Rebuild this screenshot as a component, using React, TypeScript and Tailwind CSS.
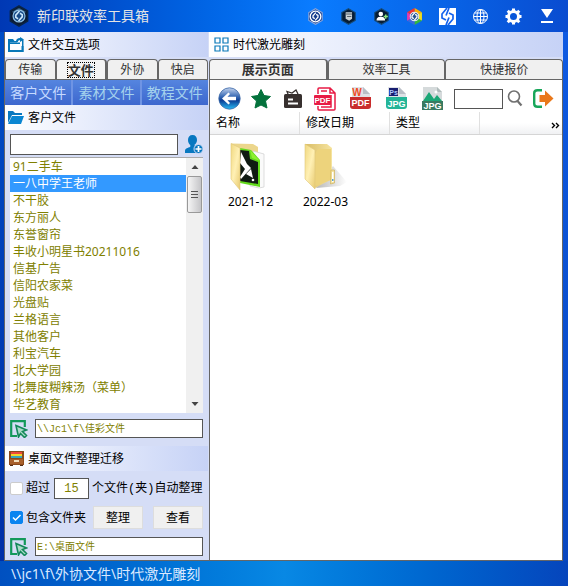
import React, { useState } from 'react'

const CLIENTS = [
    '91二手车',
    '一八中学王老师',
    '不干胶',
    '东方丽人',
    '东誉窗帘',
    '丰收小明星书20211016',
    '信基广告',
    '信阳农家菜',
    '光盘贴',
    '兰格语言',
    '其他客户',
    '利宝汽车',
    '北大学园',
    '北舞度糊辣汤（菜单）',
    '华艺教育',
]

const HEX = 'M12 1 21.5 6.5v11L12 23 2.5 17.5v-11z'

const Swirl = ({ color }: { color: string }) => (
    <>
        <path d='M12.5 6.5 8.5 11v2.5L11 15' fill='none' stroke={color} strokeWidth='1.8' />
        <path d='M11.5 17.5 15.5 13v-2.5L13 9' fill='none' stroke={color} strokeWidth='1.8' />
    </>
)

const LogoIcon = () => (
    <svg width='22' height='22' viewBox='0 0 24 24'>
        <path d={HEX} fill='#0b1c34' stroke='#0a2545' strokeWidth='1.5' />
        <path d='M12 3 20 7.5 12 10 4 7.5z' fill='#2d577d' />
        <circle cx='12' cy='12' r='6.5' fill='#174a86' stroke='#8fbfe2' strokeWidth='1.3' />
        <Swirl color='#c9e6fa' />
    </svg>
)

const HexSwirlIcon = () => (
    <svg width='17' height='17' viewBox='0 0 24 24'>
        <path d={HEX} fill='#143c8d' stroke='#8aa6dc' strokeWidth='1.5' />
        <circle cx='12' cy='12' r='7.5' fill='#143c8d' stroke='#fff' strokeWidth='1.8' />
        <Swirl color='#fff' />
    </svg>
)

const HexCupIcon = () => (
    <svg width='17' height='17' viewBox='0 0 24 24'>
        <path d={HEX} fill='#071d35' stroke='#164b78' strokeWidth='1.5' />
        <path d='M8 6h9v9l-4 3-5-3z' fill='#c8d0d4' />
        <path d='M8 8.5h9M10 12h6' stroke='#43505a' strokeWidth='1.2' />
    </svg>
)

const HexUserIcon = () => (
    <svg width='17' height='17' viewBox='0 0 24 24'>
        <path d={HEX} fill='#071d35' stroke='#164b78' strokeWidth='1.5' />
        <circle cx='11' cy='8.5' r='3.2' fill='#fff' />
        <path d='M5 17.5c0-4 3-5 6-5s6 1 6 5z' fill='#fff' />
        <path d='M18 9v6M15 12h6' stroke='#8ee87d' strokeWidth='2' />
    </svg>
)

const HexColorIcon = () => (
    <svg width='17' height='17' viewBox='0 0 24 24'>
        <path d='M12 12V0l10.500 6z' fill='#ffb000' />
        <path d='M12 12 22.500 6v12z' fill='#f2dd1c' />
        <path d='M12 12 22.500 18 12 24z' fill='#35b63c' />
        <path d='M12 12v12l-10.500-6z' fill='#3b67dc' />
        <path d='M12 12 1.500 18v-12z' fill='#e23bb0' />
        <path d='M12 12 1.500 6 12 0z' fill='#ef3434' />
        <circle cx='12' cy='12' r='6' fill='#24508d' stroke='#e6ecf5' strokeWidth='1.5' />
        <Swirl color='#fff' />
    </svg>
)

const SquareSwirlIcon = () => (
    <svg width='17' height='17' viewBox='0 0 17 17'>
        <path d='M0 0h17v17H0z' fill='#fff' />
        <path d='M8 0 3 6v4l4 2M9 17l5-6V7l-4-2M10 0 7 7.500M7 17l3-7.500' fill='none' stroke='#1463ee' strokeWidth='1.700' />
    </svg>
)

const GlobeIcon = () => (
    <svg width='17' height='17' viewBox='0 0 17 17' fill='none' stroke='#fff' strokeWidth='1'>
        <circle cx='8.5' cy='8.5' r='7' />
        <ellipse cx='8.5' cy='8.5' rx='3.5' ry='7' />
        <path d='M8.5 1.5v14M1.5 8.5h14M2.5 5h12M2.5 12h12' />
    </svg>
)

const GearIcon = () => (
    <svg width='17' height='17' viewBox='0 0 17 17'>
        <circle cx='8.5' cy='8.5' r='5' fill='none' stroke='#fff' strokeWidth='3' />
        <path
            d='M8.5 0.500v3M8.5 13.500v3M0.500 8.5h3M13.500 8.5h3M2.700 2.700l2 2M12.300 12.300l2 2M14.300 2.700l-2 2M4.700 12.300l-2 2'
            stroke='#fff'
            strokeWidth='3'
        />
    </svg>
)

const MinimizeIcon = () => (
    <svg width='14' height='14' viewBox='0 0 14 14'>
        <path d='M1 0h12L7 9z' fill='#fff' />
        <path d='M1 12h12v2H1z' fill='#fff' />
    </svg>
)

const FolderArrowIcon = () => (
    <svg width='16' height='15' viewBox='0 0 16 15'>
        <path d='M1 14V3h4l1 2h6v9z' fill='#fff' />
        <path d='M0 2h5l1.500 2H9v1.500H2V13h11.500V9H15.500v6H0z' fill='#0878b8' />
        <path d='M2 5.500h10V7H2zM14 3v12h1.500V3z' fill='#0878b8' />
        <path d='M8 5c0-3 1.500-4 4-4V0l4 2.500L12 5V3.300C10.500 3.300 10 3.800 9.800 5z' fill='#0878b8' />
    </svg>
)

const GridIcon = () => (
    <svg width='15' height='15' viewBox='0 0 15 15' fill='none' stroke='#0878b8' strokeWidth='1.2'>
        <path d='M1 1h5v5H1zM9 1h5v5H9zM1 9h5v5H1zM9 9h5v5H9z' />
    </svg>
)

const FolderOpenIcon = () => (
    <svg width='16' height='15' viewBox='0 0 16 15'>
        <path d='M0 1h5l2 2h7v2H4L0 13z' fill='#0878c0' />
        <path d='M4 6h12l-3 8H0z' fill='#0a86d2' />
    </svg>
)

const AddUserIcon = () => (
    <svg width='18' height='19' viewBox='0 0 18 19'>
        <path d='M7.5 0C4.5 0 3 2 3 5c0 2.5 1 4 2.3 5v1.7C3 13 0 13 0 16v2h13l-2-6.5-1.500-1V9.800C11 9 12 7 12 5c0-3-1.500-5-4.500-5z' fill='#0878c0' />
        <circle cx='13.5' cy='14' r='4.5' fill='#0878c0' stroke='#d5ddf6' />
        <path d='M13.5 11v6M10.500 14h6' stroke='#fff' strokeWidth='1.7' />
    </svg>
)

const PickIcon = () => (
    <svg width='18' height='18' viewBox='0 0 18 18'>
        <path d='M7 16H1.200V1.200h13.600V7' fill='none' stroke='#13995b' strokeWidth='2.200' />
        <path d='M6 5.500 16.500 10l-4 1.500 4 4-2 2-4-4L8.500 17z' fill='#a9dbc8' stroke='#13885a' strokeWidth='1.600' />
    </svg>
)

const DrawerIcon = () => (
    <svg width='15' height='15' viewBox='0 0 15 15'>
        <path d='M0 0h15v14H0z' fill='#8b4a1c' />
        <path d='M2 1h11v2H2z' fill='#ef493b' />
        <path d='M2 3h11v2H2z' fill='#f4d52b' />
        <path d='M2 5h11v2H2z' fill='#37a7bd' />
        <path d='M1 8h13v5H1z' fill='#a8602c' />
        <path d='M5 9h5v2H5z' fill='#f2dfbf' />
        <path d='M1 14h3v1H1zM11 14h3v1h-3z' fill='#532d16' />
    </svg>
)

const BackIcon = () => (
    <svg width='23' height='23' viewBox='0 0 23 23'>
        <defs>
            <linearGradient id='ball' x1='0' y1='0' x2='0' y2='1'>
                <stop offset='0' stopColor='#c3d3ed' />
                <stop offset='.4' stopColor='#3b6cb6' />
                <stop offset='.6' stopColor='#0c3f96' />
                <stop offset='1' stopColor='#28bcf5' />
            </linearGradient>
        </defs>
        <circle cx='11.5' cy='11.5' r='10.7' fill='url(#ball)' stroke='#3c68a7' strokeWidth='.8' />
        <path d='M4 11.5 10.500 5.500l1.500 1.500-2.500 2.800H18v3.400H9.500L12 16l-1.500 1.500z' fill='#fff' />
    </svg>
)

const StarIcon = () => (
    <svg width='22' height='22' viewBox='0 0 22 22'>
        <path d='m11 1.500 3 6 6.500 1-5 4.500 1.500 7L11 17l-6 3 1.500-7-5-4.500 6.500-1z' fill='#04723c' stroke='#04723c' strokeLinejoin='round' />
    </svg>
)

const BoxIcon = () => (
    <svg width='20' height='20' viewBox='0 0 20 20'>
        <path d='M5 5 4 2.5 9 4l4-3 2 4' fill='none' stroke='#37302e' strokeWidth='1.3' />
        <rect x='1' y='5' width='18' height='14' rx='1.5' fill='#37302e' />
        <path d='M5 10.500h5M5 14.500h10' stroke='#fff' strokeWidth='2' />
    </svg>
)

const PdfIcon = () => (
    <svg width='23' height='24' viewBox='0 0 23 24'>
        <path d='M4 7V2q0-1 1-1h11l5 5v16q0 1-1 1H5q-1 0-1-1v-3M16 1v5h5M7 4h6M7 20h10V8' fill='none' stroke='#e81b45' strokeWidth='1.5' />
        <rect y='8' width='17' height='10' rx='1' fill='#e81b45' />
        <text x='8.5' y='16' textAnchor='middle' fontSize='8' fontWeight='700' fill='#fff' fontFamily='Liberation Sans, sans-serif'>PDF</text>
    </svg>
)

const WpsPdfIcon = () => (
    <svg width='23' height='23' viewBox='0 0 23 23'>
        <path d='M3 0h11l7 7v6H3z' fill='#dfe2e6' />
        <path d='M14 0v7h7z' fill='#b9bec6' />
        <text x='8' y='8.5' textAnchor='middle' fontSize='10' fontWeight='700' fill='#f04b22' fontFamily='Liberation Sans, sans-serif'>W</text>
        <path d='M1 10h21v9q0 3-3 3H4q-3 0-3-3z' fill='#c92c2c' />
        <text x='11.5' y='19' textAnchor='middle' fontSize='9' fontWeight='700' fill='#fff' fontFamily='Liberation Sans, sans-serif'>PDF</text>
    </svg>
)

const PsJpgIcon = () => (
    <svg width='23' height='23' viewBox='0 0 23 23'>
        <path d='M3 0h11l7 7v6H3z' fill='#dfe2e6' />
        <path d='M14 0v7h7z' fill='#b9bec6' />
        <path d='M4 1h9v8H4z' fill='#171d70' />
        <text x='8.5' y='7.5' textAnchor='middle' fontSize='7' fontWeight='700' fill='#aec6ff' fontFamily='Liberation Sans, sans-serif'>Ps</text>
        <path d='M1 10h21v9q0 3-3 3H4q-3 0-3-3z' fill='#24b598' />
        <text x='11.5' y='19.5' textAnchor='middle' fontSize='9' fontWeight='700' fill='#fff' fontFamily='Liberation Sans, sans-serif'>JPG</text>
    </svg>
)

const ImageJpgIcon = () => (
    <svg width='21' height='24' viewBox='0 0 21 24'>
        <path d='M1 0h14l5 5v18H1z' fill='#d5dadb' />
        <path d='M15 0v5h5z' fill='#b0bbbb' />
        <path d='m1 14 6-9 5 7 3-4 5 6z' fill='#1ba776' />
        <circle cx='14' cy='5' r='1.5' fill='#fff' />
        <path d='M0 14h21v9H0z' fill='#397a61' />
        <text x='10.5' y='22' textAnchor='middle' fontSize='9' fontWeight='700' fill='#fff' fontFamily='Liberation Sans, sans-serif'>JPG</text>
    </svg>
)

const SearchIcon = () => (
    <svg width='16' height='17' viewBox='0 0 16 17' fill='none' stroke='#707070' strokeWidth='1.6'>
        <circle cx='7' cy='6.5' r='5.5' />
        <path d='m10.500 11 4 4.500' strokeWidth='2.2' />
    </svg>
)

const ExitIcon = () => (
    <svg width='21' height='19' viewBox='0 0 21 19'>
        <path d='M9 1.200H4.500q-3.300 0-3.300 3v10.600q0 3 3.300 3H9' fill='none' stroke='#18a65a' strokeWidth='2.400' />
        <path d='M6.500 6H12V1.500l8.500 8L12 17.500V13H6.500z' fill='#e9781b' />
    </svg>
)

const FolderArt = ({ document }: { document?: boolean }) => (
    <svg width='44' height='50' viewBox='0 0 44 50'>
        <defs>
            <linearGradient id='leaf' x1='0' y1='0' x2='1' y2='1'>
                <stop offset='0' stopColor='#f0d880' />
                <stop offset='.5' stopColor='#fff0b4' />
                <stop offset='1' stopColor='#e8ca70' />
            </linearGradient>
            <linearGradient id='back'>
                <stop offset='0' stopColor='#d9bd66' />
                <stop offset='1' stopColor='#f6e4a0' />
            </linearGradient>
            <linearGradient id='shade'>
                <stop offset='0' stopColor='#888' stopOpacity='.6' />
                <stop offset='1' stopColor='#888' stopOpacity='0' />
            </linearGradient>
        </defs>
        {document ? (
            <>
                <path d='M2 1.500 24 2l5 3v10H10z' fill='#ecd68c' />
                <path d='M24 9l11 3v33l-5 1-9-2z' fill='#fafafa' stroke='#cfcfcf' strokeWidth='.7' />
                <path d='M11 6l11 2 9 10v27l-20-4z' fill='#62d91c' />
                <path d='M11 8l9 1 1 8 8 3v22l-18-3z' fill='#0f1a12' />
                <path d='m21 8 10 11-8-3z' fill='#8df02f' />
                <path d='m12 10 6 12 4 4-10 11-1-2 5-8-5-6z' fill='#fff' />
                <path d='m17 32 5-5 2 9z' fill='#fff' />
                <circle cx='24' cy='38' r='1.300' fill='#fff' />
                <path d='M2 1.500 11 6v42L2 37z' fill='url(#leaf)' stroke='#dfc67a' strokeWidth='.6' />
            </>
        ) : (
            <>
                <path d='M29 24 43 40 36 44 12 46z' fill='url(#shade)' />
                <path d='M1 2h22l5 4v31l-17 9z' fill='url(#back)' />
                <path d='M14 7h13v31l-16 6V12z' fill='#edd37c' />
                <path d='M27 28h3.500v13l-4 1z' fill='#f4e2a0' stroke='#c9ab50' strokeWidth='.6' />
                <path d='M28 30h1.500v10H28z' fill='#fff' />
                <path d='M28 37h1.500v2H28z' fill='#54a2d4' />
                <path d='M1 2 11 8v39L1 37z' fill='url(#leaf)' stroke='#dfc67a' strokeWidth='.6' />
            </>
        )}
    </svg>
)

const TITLE_ACTIONS = [
    { label: '印联', icon: <HexSwirlIcon /> },
    { label: '工具', icon: <HexCupIcon /> },
    { label: '用户', icon: <HexUserIcon /> },
    { label: '色彩', icon: <HexColorIcon /> },
    { label: '主页', icon: <SquareSwirlIcon /> },
    { label: '网站', icon: <GlobeIcon /> },
    { label: '设置', icon: <GearIcon /> },
    { label: '最小化', icon: <MinimizeIcon /> },
]

const FILE_TOOLS = [
    { label: '返回', icon: <BackIcon />, box: 'w-8' },
    { label: '收藏', icon: <StarIcon />, box: 'w-8' },
    { label: '打包', icon: <BoxIcon />, box: 'w-8' },
    { label: 'PDF', icon: <PdfIcon />, box: 'w-[33px]' },
    { label: 'WPS PDF', icon: <WpsPdfIcon />, box: 'w-9' },
    { label: 'PS JPG', icon: <PsJpgIcon />, box: 'w-9' },
    { label: 'JPG', icon: <ImageJpgIcon />, box: 'w-9' },
]

interface TabsProps {
    items: string[]
    active: string
    onChange: (item: string) => void
    focused?: boolean
}

const Tabs: React.FC<TabsProps> = ({ items, active, onChange, focused }) => (
    <div role='tablist' className='flex h-[23px] pt-0.5 border-b border-[#666]'>
        {items.map(item => (
            <button
                key={item}
                role='tab'
                aria-selected={item === active}
                onClick={() => onChange(item)}
                className={`flex-1 flex items-center justify-center rounded-t-[4px] border border-b-0 border-[#666] text-[#333]
                ${item === active ? 'bg-[#f4f4f4] border-r-2 text-[13px] font-bold' : 'bg-[#f0f0f0] text-xs'}`}
            >
                <span className={focused && item === active ? 'border border-dotted border-black leading-[14px]' : ''}>
                    {item}
                </span>
            </button>
        ))}
    </div>
)

const SectionHeader: React.FC<{ icon: React.ReactNode; title: string }> = ({ icon, title }) => (
    <h2 className='flex h-[25px] items-center gap-1 bg-gradient-to-r from-white to-[#c6d2f6] pl-[3px] text-xs text-black'>
        <span className='flex w-4 justify-center'>{icon}</span>
        {title}
    </h2>
)

const App: React.FC = () => {
    const [leftTab, setLeftTab] = useState('文件')
    const [rightTab, setRightTab] = useState('展示页面')
    const [client, setClient] = useState('一八中学王老师')
    const [overLimit, setOverLimit] = useState(false)
    const [includeFolders, setIncludeFolders] = useState(true)

    return (
        <div className="flex min-h-screen w-full flex-col bg-[linear-gradient(100deg,#0050c8_0%,#0028a0_18%,#0456dc_38%,#0a7cff_55%,#1164f4_78%,#0845bd_100%)] font-['Noto_Sans','Noto_Sans_CJK_SC',sans-serif] text-xs text-black">

            {/* Title bar */}
            <header className='flex h-8 items-center justify-between bg-gradient-to-r from-[#0038b4] via-[#0a7cff] via-55% to-[#0a4cd0] pl-2 pr-[5px]'>
                <div className='flex items-center gap-[7px]'>
                    <LogoIcon />
                    <h1 className='text-sm text-[#e4e4e4]'>新印联效率工具箱</h1>
                </div>
                <div className='flex'>
                    {TITLE_ACTIONS.map(a => (
                        <button key={a.label} aria-label={a.label} className='flex w-[33px] items-center justify-center'>
                            {a.icon}
                        </button>
                    ))}
                </div>
            </header>

            <main className='flex flex-1 pl-1 pr-[5px]'>

                {/* Left panel */}
                <section className='flex w-[205px] shrink-0 flex-col border-b border-l border-[#666] bg-[#d5ddf6] pr-px'>
                    <SectionHeader icon={<FolderArrowIcon />} title='文件交互选项' />
                    <Tabs items={['传输', '文件', '外协', '快启']} active={leftTab} onChange={setLeftTab} focused />

                    <nav className='flex h-[25px] gap-0.5 bg-[#6f94e4]'>
                        {['客户文件', '素材文件', '教程文件'].map((name, i) => (
                            <button
                                key={name}
                                className={`flex-1 bg-gradient-to-b from-[#5585df] to-[#3d67ce] text-sm ${i === 0 ? 'text-[#c6daff]' : 'text-[#a4d2ed]'}`}
                            >
                                {name}
                            </button>
                        ))}
                    </nav>

                    <SectionHeader icon={<FolderOpenIcon />} title='客户文件' />

                    <div className='flex items-center gap-[7px] px-[5px] pt-1'>
                        <input aria-label='客户名称' className='h-[21px] min-w-0 flex-1 border border-[#555] bg-white px-1 outline-none' />
                        <button aria-label='添加客户'><AddUserIcon /></button>
                    </div>

                    {/* Client list */}
                    <div className='mx-[5px] mt-0.5 flex border-t border-[#aaa] bg-white'>
                        <ul className='min-w-0 flex-1'>
                            {CLIENTS.map(name => (
                                <li key={name}>
                                    <button
                                        onClick={() => setClient(name)}
                                        className={`block h-[17px] w-full whitespace-nowrap pl-[3px] text-left leading-[17px]
                                        ${name === client ? 'bg-[#3399ff] text-white' : 'text-[#808000]'}`}
                                    >
                                        {name}
                                    </button>
                                </li>
                            ))}
                        </ul>
                        <div className='flex w-[17px] flex-col items-center bg-[#f0f0f0]'>
                            <svg width='16' height='18' viewBox='0 0 16 18'><path d='m4.5 11 3.5-4 3.5 4z' fill='#444' /></svg>
                            <div className='flex h-[37px] w-[15px] flex-col items-center justify-center gap-0.5 rounded-xs border border-[#999] bg-gradient-to-r from-[#f5f5f5] to-[#c5c5c8]'>
                                <span className='h-px w-[7px] bg-[#555]' />
                                <span className='h-px w-[7px] bg-[#555]' />
                                <span className='h-px w-[7px] bg-[#555]' />
                            </div>
                            <svg className='mt-auto' width='16' height='18' viewBox='0 0 16 18'><path d='M4.5 7h7L8 11z' fill='#444' /></svg>
                        </div>
                    </div>

                    <div className='mt-1.5 flex h-[19px] items-center gap-[7px] px-[5px]'>
                        <button aria-label='选择目录'><PickIcon /></button>
                        <input
                            aria-label='客户文件路径'
                            defaultValue='\\Jc1\f\佳彩文件'
                            className="h-[19px] min-w-0 flex-1 border border-[#555] bg-white pb-0.5 pl-px font-['Liberation_Mono','Noto_Sans_CJK_SC',monospace] text-[10px] text-[#808000] outline-none"
                        />
                    </div>

                    {/* Desktop cleanup */}
                    <div className='mt-2'>
                        <SectionHeader icon={<DrawerIcon />} title='桌面文件整理迁移' />
                    </div>

                    <div className="mt-[7px] flex h-[21px] items-center whitespace-nowrap px-[5px] font-['Liberation_Mono','Noto_Sans_CJK_SC',monospace]">
                        <label className='flex items-center gap-[3px]'>
                            <input
                                type='checkbox'
                                checked={overLimit}
                                onChange={e => setOverLimit(e.target.checked)}
                                className='h-[13px] w-[13px] appearance-none rounded-xs border border-[#ccc] bg-white checked:bg-[#0a84f0]'
                            />
                            超过
                        </label>
                        <input
                            aria-label='文件个数'
                            defaultValue='15'
                            className='ml-1 mr-[3px] h-[21px] w-[35px] border border-[#555] bg-white text-center text-[#808000] outline-none'
                        />
                        个文件(夹)自动整理
                    </div>

                    <div className='mt-[7px] flex h-[23px] items-center whitespace-nowrap px-[5px]'>
                        <label className='relative flex items-center gap-[3px]'>
                            <input
                                type='checkbox'
                                checked={includeFolders}
                                onChange={e => setIncludeFolders(e.target.checked)}
                                className='h-[13px] w-[13px] appearance-none rounded-xs border border-[#ccc] bg-white checked:border-[#0a84f0] checked:bg-[#0a84f0]'
                            />
                            {includeFolders && (
                                <svg className='pointer-events-none absolute left-0' width='13' height='13' viewBox='0 0 13 13'>
                                    <path d='m3 6.5 2.5 2.5L10.5 4' fill='none' stroke='#fff' strokeWidth='1.5' />
                                </svg>
                            )}
                            包含文件夹
                        </label>
                        <div className='ml-auto flex gap-2.5'>
                            <button className='h-[23px] w-[50px] border border-[#ddd] bg-[#f0f0f0]'>整理</button>
                            <button className='h-[23px] w-[50px] border border-[#ddd] bg-[#f0f0f0]'>查看</button>
                        </div>
                    </div>

                    <div className='mb-1 mt-2 flex h-[19px] items-center gap-[7px] px-[5px]'>
                        <button aria-label='选择桌面目录'><PickIcon /></button>
                        <input
                            aria-label='桌面文件路径'
                            defaultValue='E:\桌面文件'
                            className="h-[19px] min-w-0 flex-1 border border-[#555] bg-white pb-0.5 pl-px font-['Liberation_Mono','Noto_Sans_CJK_SC',monospace] text-[10px] text-[#808000] outline-none"
                        />
                    </div>
                </section>

                {/* Right panel */}
                <section className='flex min-w-0 flex-1 flex-col bg-[#d5ddf6]'>
                    <div className='bg-white pl-px'>
                        <SectionHeader icon={<GridIcon />} title='时代激光雕刻' />
                    </div>
                    <Tabs items={['展示页面', '效率工具', '快捷报价']} active={rightTab} onChange={setRightTab} />

                    <div className='flex flex-1 flex-col border-x border-b border-[#666] bg-white'>
                        <div className='flex h-8 items-center pl-[3px] pt-[5px]'>
                            {FILE_TOOLS.map(t => (
                                <button key={t.label} aria-label={t.label} className={`flex ${t.box} shrink-0 items-center justify-center`}>
                                    {t.icon}
                                </button>
                            ))}
                            <input aria-label='搜索文件' className='ml-1 h-5 w-[49px] border border-[#555] bg-white px-1 outline-none' />
                            <button aria-label='搜索' className='ml-1'><SearchIcon /></button>
                            <button aria-label='退出' className='ml-2.5'><ExitIcon /></button>
                        </div>

                        <div className='flex h-[23px] border-b border-[#d5d5d5] bg-gradient-to-b from-white from-50% to-[#f0f1f3]'>
                            {['名称', '修改日期', '类型'].map(col => (
                                <button key={col} className='w-[90px] border-r border-[#e0e0e0] pl-1.5 text-left'>{col}</button>
                            ))}
                            <button aria-label='更多' className='ml-auto flex items-center pr-0.5 pt-1'>
                                <svg width='9' height='7' viewBox='0 0 9 7' fill='none' stroke='#000' strokeWidth='1.4'>
                                    <path d='m1 1 2.5 2.5L1 6M5 1l2.5 2.5L5 6' />
                                </svg>
                            </button>
                        </div>

                        <div className='flex items-start px-[3px] pt-[7px]'>
                            {['2021-12', '2022-03'].map((name, i) => (
                                <button key={name} className='flex w-[75px] flex-col items-center gap-0.5'>
                                    <FolderArt document={i === 0} />
                                    {name}
                                </button>
                            ))}
                        </div>
                    </div>
                </section>
            </main>

            {/* Status bar */}
            <footer className='flex h-[25px] items-center bg-gradient-to-r from-[#0050c0] via-[#0888e4] to-[#0645bc] pl-[11px] text-sm text-[#d9e9ff]'>
                \\jc1\f\外协文件\时代激光雕刻
            </footer>
        </div>
    )
}

export default App
